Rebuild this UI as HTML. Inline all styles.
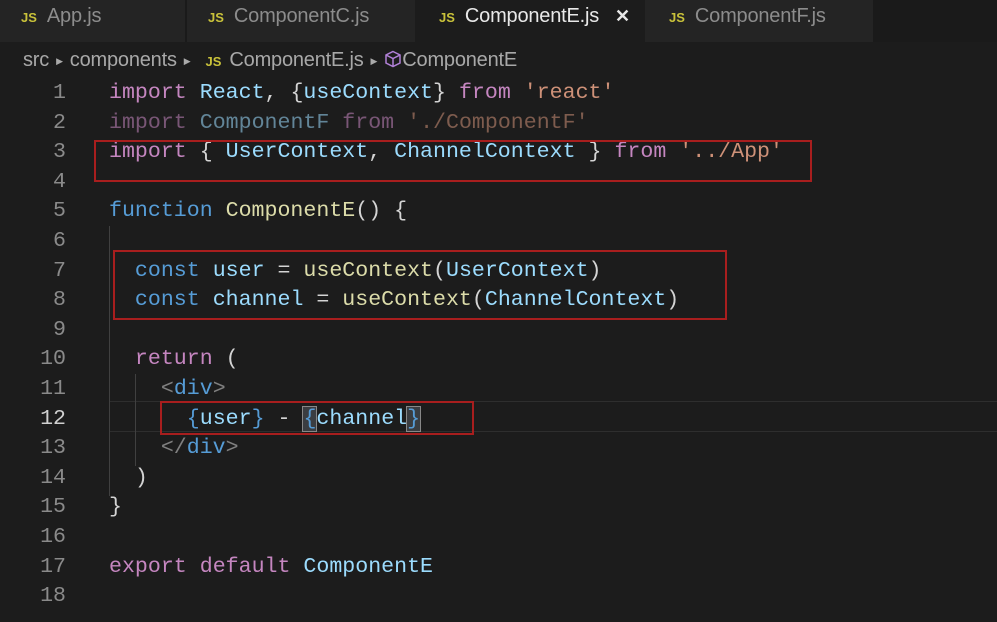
<!DOCTYPE html>
<html><head><meta charset="utf-8"><style>
*{margin:0;padding:0;box-sizing:border-box}
body{width:997px;height:622px;background:#1c1c1c;overflow:hidden;position:relative;font-family:"Liberation Sans",sans-serif}
.tabs{position:absolute;left:0;top:0;width:997px;height:42px;background:#1a1a1a}
.tab{position:absolute;top:0;height:42px;background:#242424;color:#8c8c8c;font-size:20px;line-height:33px;letter-spacing:-0.2px}
.tab .js{color:#c9c23a;font-weight:bold;font-size:13px;margin-right:10px;letter-spacing:0}
.tab.act{background:#1c1c1c;color:#e8e8e8}
.bc{position:absolute;top:46px;left:23px;color:#a8a8a8;font-size:20px;letter-spacing:-0.2px;line-height:28px;white-space:nowrap}
.bc .js{color:#c9c23a;font-weight:bold;font-size:13px;margin:0 8px 0 8px;letter-spacing:0}
.bc .ar{font-size:9px;margin:0 7px;color:#aaa;vertical-align:2px}
.code{position:absolute;left:0;top:79px;font-family:"Liberation Mono",monospace;font-size:21.6px;white-space:pre}
.ln{position:absolute;left:0;width:66px;text-align:right;color:#8a8a8a;height:29.6px;line-height:29.6px}
.ln.cur{color:#d0d0d0}
.l{position:absolute;left:109px;height:29.6px;line-height:29.6px;color:#d4d4d4}
.k{color:#c586c0}.v{color:#9cdcfe}.f{color:#dcdcaa}.b{color:#569cd6}.s{color:#ce9178}.y{color:#d4d4d4}.g{color:#808080}.c{color:#9cdcfe}
.dim{opacity:.55}
.box{position:absolute;border:2px solid #a81e1e}
.guide{position:absolute;width:1px;background:#404040}
.curline{position:absolute;left:109px;right:0;top:401px;height:31px;border-top:1px solid #2e2e2e;border-bottom:1px solid #2e2e2e}
.bm{outline:1px solid #888;background:#3a3d41}
</style></head><body>
<div class="tabs">
<div class="tab" style="left:0;width:185px;padding-left:21px"><span class="js">JS</span>App.js</div>
<div class="tab" style="left:187px;width:228px;padding-left:21px"><span class="js">JS</span>ComponentC.js</div>
<div class="tab act" style="left:415px;width:230px;padding-left:24px"><span class="js">JS</span>ComponentE.js<span style="margin-left:16px;font-weight:bold;font-size:18px">✕</span></div>
<div class="tab" style="left:645px;width:228px;padding-left:24px"><span class="js">JS</span>ComponentF.js</div>
</div>
<div class="bc">src<span class="ar">▶</span>components<span class="ar">▶</span><span class="js">JS</span>ComponentE.js<span class="ar">▶</span><svg width="18" height="18" viewBox="0 0 18 18" style="vertical-align:-2px"><path d="M9 1.5L16 5v8l-7 3.5L2 13V5z M2 5l7 3.5L16 5 M9 8.5v8" fill="none" stroke="#b180d7" stroke-width="1.5"/></svg>ComponentE</div>
<div class="curline"></div>
<div class="guide" style="left:109px;top:226px;height:270px"></div>
<div class="guide" style="left:135px;top:374px;height:92px"></div>
<div class="code">
<div class="ln" style="top:0">1</div><div class="l" style="top:0"><span class="k">import</span> <span class="v">React</span>, <span class="y">{</span><span class="v">useContext</span><span class="y">}</span> <span class="k">from</span> <span class="s">'react'</span></div>
<div class="ln" style="top:29.6px">2</div><div class="l dim" style="top:29.6px"><span class="k">import</span> <span class="v">ComponentF</span> <span class="k">from</span> <span class="s">'./ComponentF'</span></div>
<div class="ln" style="top:59.2px">3</div><div class="l" style="top:59.2px"><span class="k">import</span> <span class="y">{</span> <span class="v">UserContext</span>, <span class="v">ChannelContext</span> <span class="y">}</span> <span class="k">from</span> <span class="s">'../App'</span></div>
<div class="ln" style="top:88.8px">4</div>
<div class="ln" style="top:118.4px">5</div><div class="l" style="top:118.4px"><span class="b">function</span> <span class="f">ComponentE</span><span class="y">()</span> <span class="y">{</span></div>
<div class="ln" style="top:148px">6</div>
<div class="ln" style="top:177.6px">7</div><div class="l" style="top:177.6px">  <span class="b">const</span> <span class="c">user</span> = <span class="f">useContext</span>(<span class="v">UserContext</span>)</div>
<div class="ln" style="top:207.2px">8</div><div class="l" style="top:207.2px">  <span class="b">const</span> <span class="c">channel</span> = <span class="f">useContext</span>(<span class="v">ChannelContext</span>)</div>
<div class="ln" style="top:236.8px">9</div>
<div class="ln" style="top:266.4px">10</div><div class="l" style="top:266.4px">  <span class="k">return</span> (</div>
<div class="ln" style="top:296px">11</div><div class="l" style="top:296px">    <span class="g">&lt;</span><span class="b">div</span><span class="g">&gt;</span></div>
<div class="ln cur" style="top:325.6px">12</div><div class="l" style="top:325.6px">      <span class="b">{</span><span class="v">user</span><span class="b">}</span> - <span class="b bm">{</span><span class="v">channel</span><span class="b bm">}</span></div>
<div class="ln" style="top:355.2px">13</div><div class="l" style="top:355.2px">    <span class="g">&lt;/</span><span class="b">div</span><span class="g">&gt;</span></div>
<div class="ln" style="top:384.8px">14</div><div class="l" style="top:384.8px">  )</div>
<div class="ln" style="top:414.4px">15</div><div class="l" style="top:414.4px"><span class="y">}</span></div>
<div class="ln" style="top:444px">16</div>
<div class="ln" style="top:473.6px">17</div><div class="l" style="top:473.6px"><span class="k">export</span> <span class="k">default</span> <span class="v">ComponentE</span></div>
<div class="ln" style="top:503.2px">18</div>
</div>
<div class="box" style="left:94px;top:140px;width:718px;height:42px"></div>
<div class="box" style="left:113px;top:250px;width:614px;height:70px"></div>
<div class="box" style="left:160px;top:401px;width:314px;height:34px"></div>
</body></html>
